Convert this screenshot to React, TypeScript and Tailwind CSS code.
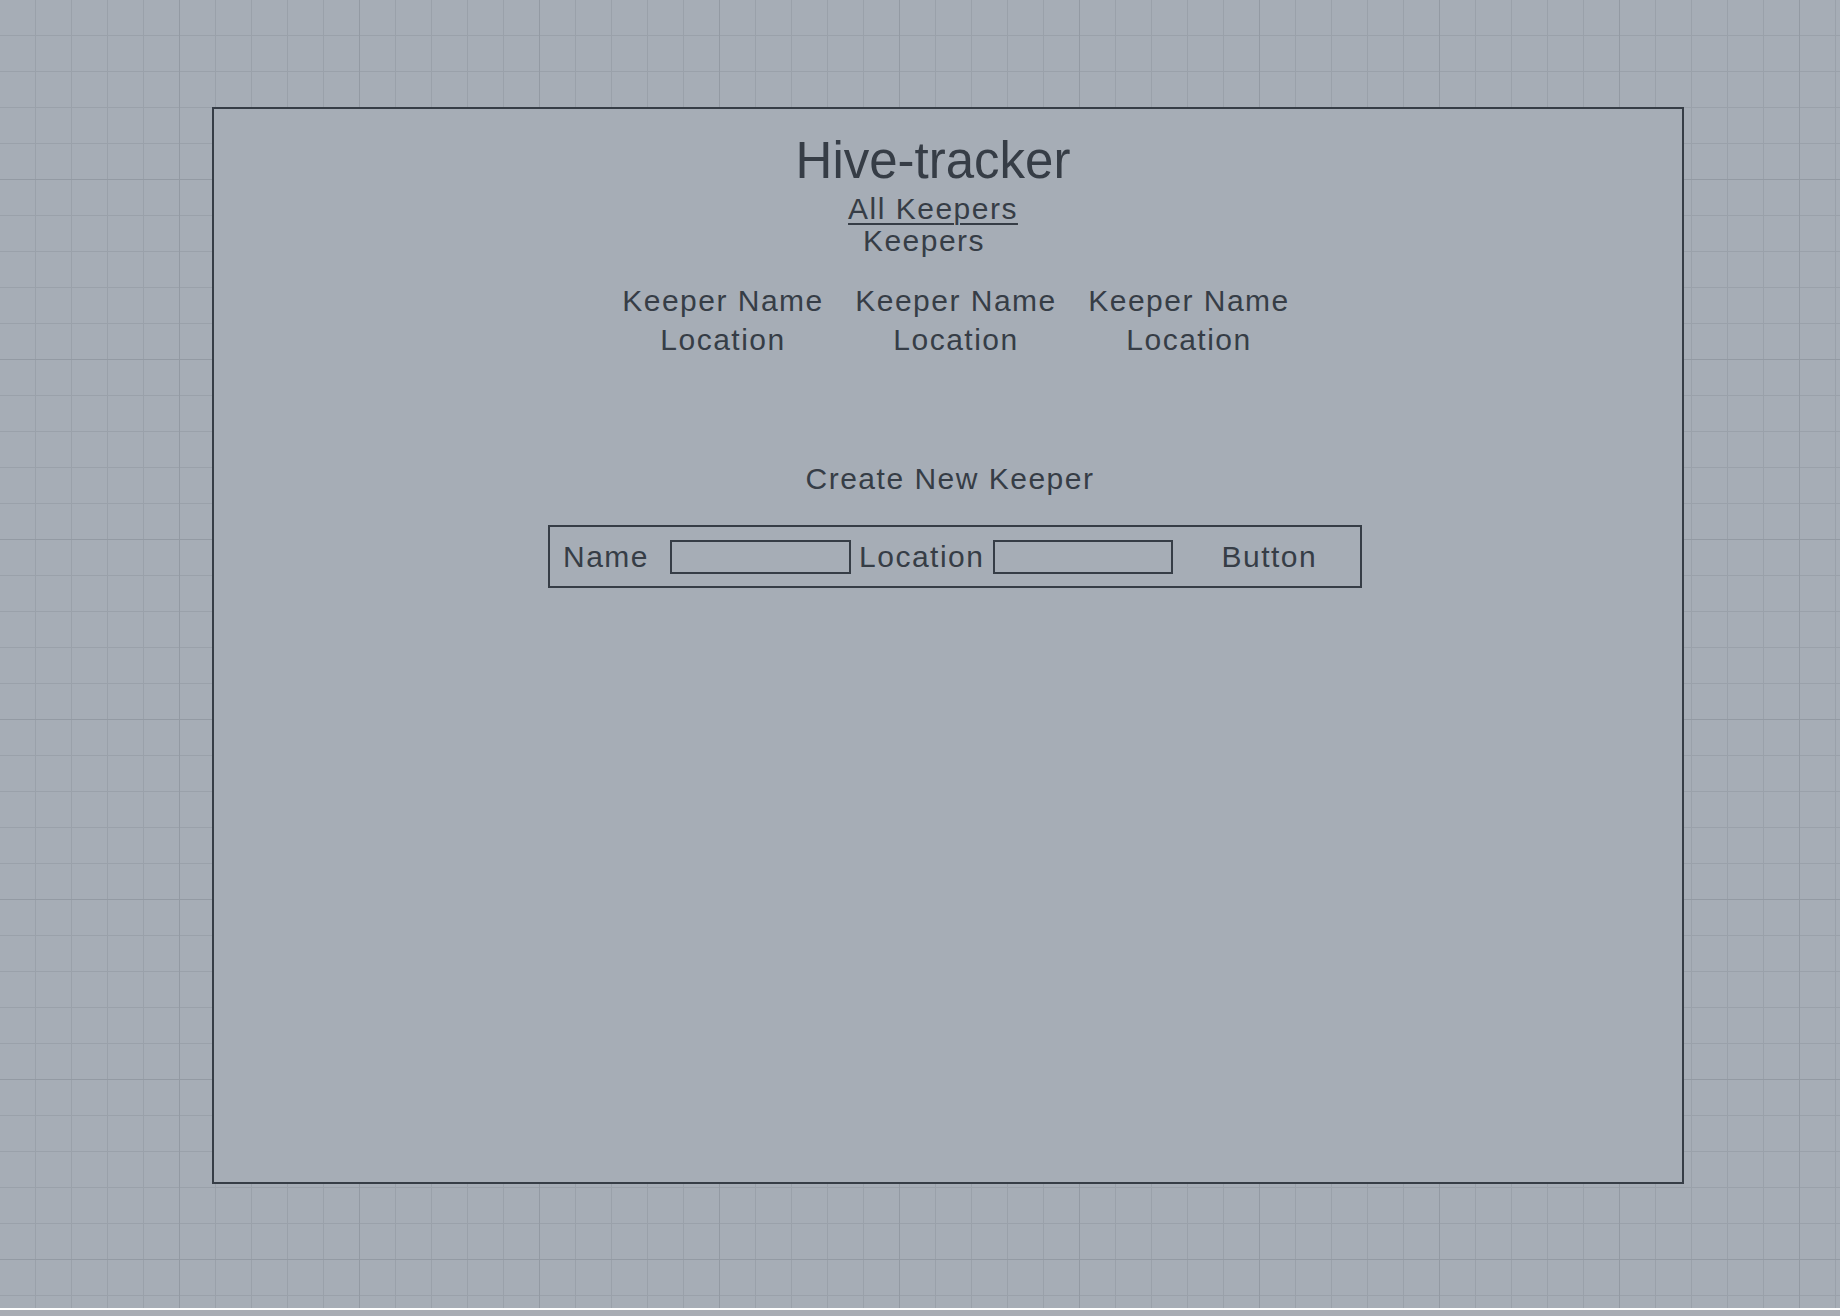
export default function App() {
    const keepers = [1, 2, 3]

    return (
        <div className="font-['Liberation_Sans',Arial,sans-serif] text-[#363d46]">
            <div className="h-[1308px] bg-[#a6adb6] bg-[image:linear-gradient(to_right,#939aa3_1px,transparent_1px),linear-gradient(to_bottom,#939aa3_1px,transparent_1px),linear-gradient(to_right,#9aa1aa_1px,transparent_1px),linear-gradient(to_bottom,#9aa1aa_1px,transparent_1px)] bg-[size:180px_180px,180px_180px,36px_36px,36px_36px] bg-[position:179px_179px,179px_179px,35px_35px,35px_35px] pl-[212px] pt-[107px]">
                <div className="flex h-[1077px] w-[1472px] flex-col items-center border-2 border-[#363d46] bg-[#a6adb6] pt-[22px]">
                    <h1 className="mr-[30px] text-[51px] leading-[60px]">
                        Hive-tracker
                    </h1>
                    <a className="mt-[2px] mr-[30px] text-[30px] leading-[32px] tracking-[1.5px] underline decoration-2 underline-offset-[4px]">
                        All Keepers
                    </a>
                    <h2 className="mr-[48px] text-[30px] leading-[32px] tracking-[1.5px]">
                        Keepers
                    </h2>

                    <div className="mt-[27px] ml-[16px] flex gap-[31px]">
                        {keepers.map((k) => (
                            <div
                                key={k}
                                className="w-[202px] whitespace-nowrap text-center text-[30px] leading-[34.5px] tracking-[1.5px]"
                            >
                                <div>Keeper Name</div>
                                <div className="mt-[4px]">Location</div>
                            </div>
                        ))}
                    </div>

                    <div className="mt-[105px] ml-[4px] text-[30px] leading-[34.5px] tracking-[1.5px]">
                        Create New Keeper
                    </div>

                    <form className="mt-[28px] ml-[14px] flex h-[63px] w-[814px] items-center border-2 border-[#363d46] pt-[2px] pl-[13px] text-[30px] leading-[34.5px] tracking-[1.5px]">
                        <label className="mt-[1px]">Name</label>
                        <input className="ml-[21px] h-[34px] w-[181px] border-2 border-[#363d46] bg-transparent" />
                        <label className="mt-[1px] ml-[8px]">Location</label>
                        <input className="ml-[9px] h-[34px] w-[180px] border-2 border-[#363d46] bg-transparent" />
                        <button
                            type="button"
                            className="mt-[1px] ml-[48px] tracking-[1.5px]"
                        >
                            Button
                        </button>
                    </form>
                </div>
            </div>
            <div className="h-[2px] bg-white" />
            <div className="h-[6px] bg-[#a8acb3]" />
        </div>
    )
}
